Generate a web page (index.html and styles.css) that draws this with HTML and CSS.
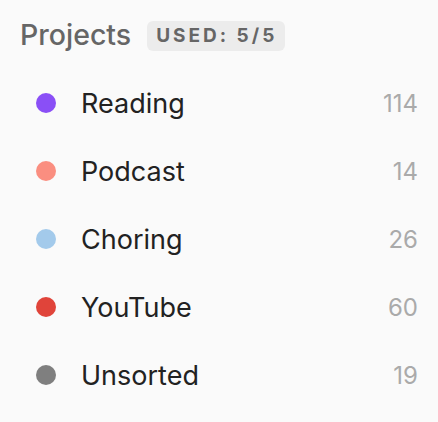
FILE: index.html
```html
<!DOCTYPE html>
<html>
<head>
<meta charset="utf-8">
<link rel="stylesheet" href="styles.css">
</head>
<body>
<div class="panel">
  <div class="header">
    <span class="title">Projects</span>
    <span class="badge">USED: 5/5</span>
  </div>
  <ul class="list">
    <li class="row"><span class="dot dot-purple"></span><span class="name">Reading</span><span class="count">114</span></li>
    <li class="row"><span class="dot dot-salmon"></span><span class="name">Podcast</span><span class="count">14</span></li>
    <li class="row"><span class="dot dot-blue"></span><span class="name">Choring</span><span class="count">26</span></li>
    <li class="row"><span class="dot dot-red"></span><span class="name">YouTube</span><span class="count">60</span></li>
    <li class="row"><span class="dot dot-gray"></span><span class="name">Unsorted</span><span class="count">19</span></li>
  </ul>
</div>
</body>
</html>
```
FILE: styles.css
```css
html, body {
  margin: 0;
  padding: 0;
  background: #fafafa;
}
body {
  font-family: Inter, "Noto Sans", sans-serif;
  width: 438px;
  height: 422px;
  overflow: hidden;
}
.panel {
  padding: 18px 20px 0 20px;
}
.header {
  display: flex;
  align-items: center;
  height: 36px;
  gap: 16px;
}
.title {
  font-size: 28.5px;
  font-weight: 500;
  color: #666;
  margin-top: -3px;
}
.badge {
  background: #ececec;
  color: #666;
  font-size: 19px;
  font-weight: 700;
  letter-spacing: 3px;
  padding: 4px 8px 4px 9px;
  border-radius: 6px;
  line-height: 22px;
}
.list {
  list-style: none;
  margin: 0;
  padding: 0;
  margin-top: 15px;
}
.row {
  display: flex;
  align-items: center;
  height: 68px;
}
.dot {
  width: 20px;
  height: 20px;
  border-radius: 50%;
  margin-left: 16px;
  margin-right: 25px;
  flex: none;
}
.dot-purple { background: #8a4ff6; }
.dot-salmon { background: #fa8e80; }
.dot-blue { background: #a3caeb; }
.dot-red { background: #e0443a; }
.dot-gray { background: #7f7f7f; }
.name {
  flex: 1;
  font-size: 27px;
  color: #222;
}
.count {
  font-size: 24px;
  color: #aaa;
}
```
